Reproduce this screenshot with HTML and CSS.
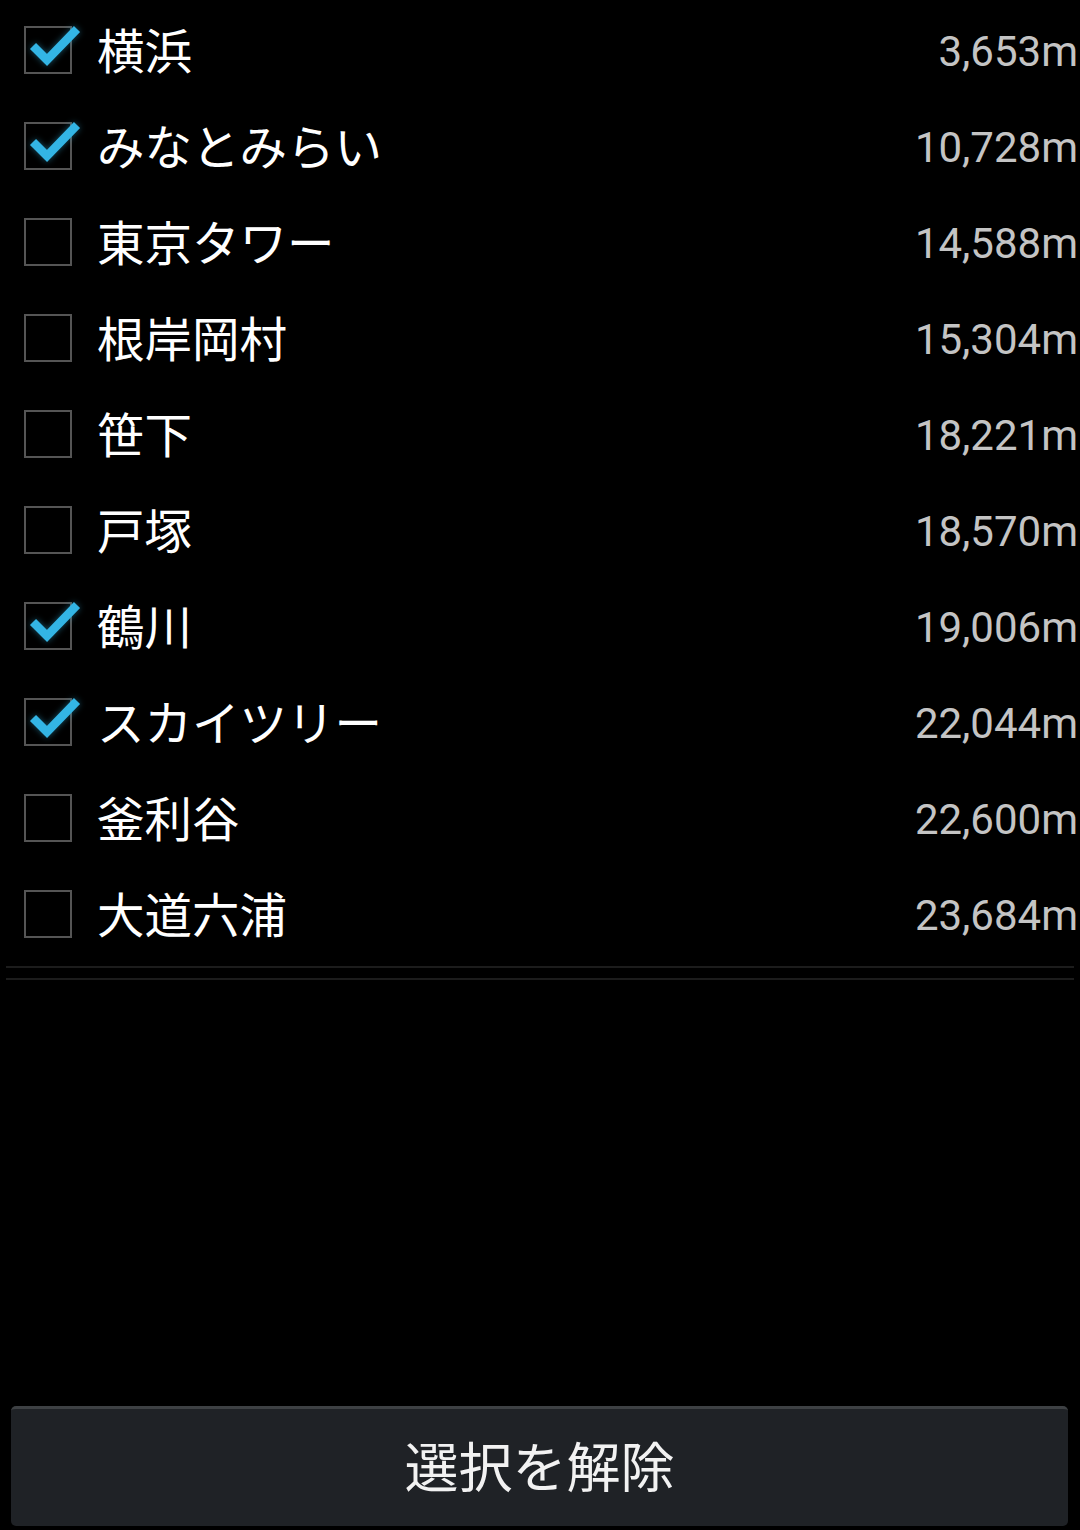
FILE: index.html
```html
<!DOCTYPE html>
<html lang="ja">
<head>
  <meta charset="UTF-8" />
  <title>スポット選択</title>
  <link rel="stylesheet" href="styles.css">
</head>
<body>
  <div class="screen">
    <ul class="spot-list">
      <li class="spot checked"><span class="box"><svg class="tick" viewBox="0 0 48 48"><polyline points="9,20 23,34 53,3" /></svg></span><span class="name">横浜</span><span class="dist">3,653m</span></li>
      <li class="spot checked"><span class="box"><svg class="tick" viewBox="0 0 48 48"><polyline points="9,20 23,34 53,3" /></svg></span><span class="name">みなとみらい</span><span class="dist">10,728m</span></li>
      <li class="spot"><span class="box"></span><span class="name">東京タワー</span><span class="dist">14,588m</span></li>
      <li class="spot"><span class="box"></span><span class="name">根岸岡村</span><span class="dist">15,304m</span></li>
      <li class="spot"><span class="box"></span><span class="name">笹下</span><span class="dist">18,221m</span></li>
      <li class="spot"><span class="box"></span><span class="name">戸塚</span><span class="dist">18,570m</span></li>
      <li class="spot checked"><span class="box"><svg class="tick" viewBox="0 0 48 48"><polyline points="9,20 23,34 53,3" /></svg></span><span class="name">鶴川</span><span class="dist">19,006m</span></li>
      <li class="spot checked"><span class="box"><svg class="tick" viewBox="0 0 48 48"><polyline points="9,20 23,34 53,3" /></svg></span><span class="name">スカイツリー</span><span class="dist">22,044m</span></li>
      <li class="spot"><span class="box"></span><span class="name">釜利谷</span><span class="dist">22,600m</span></li>
      <li class="spot"><span class="box"></span><span class="name">大道六浦</span><span class="dist">23,684m</span></li>
    </ul>

    <div class="divider"></div>
    <div class="divider"></div>

    <button class="clear-btn" type="button">選択を解除</button>
  </div>
</body>
</html>
```

FILE: styles.css
```css
/* Base */
* {
  box-sizing: border-box;
}
html, body {
  margin: 0;
  padding: 0;
  background: #000;
}
body {
  font-family: "Noto Sans CJK JP", "Noto Sans", sans-serif;
  color: #fff;
}

.screen {
  height: 1530px;
  display: flex;
  flex-direction: column;
  padding-top: 2px;
}

/* List */
.spot-list {
  list-style: none;
  margin: 0;
  padding: 0;
}

.spot {
  height: 96px;
  display: flex;
  align-items: center;
  padding: 0 2px 0 24px;
}

.box {
  position: relative;
  width: 48px;
  height: 48px;
  flex: none;
  border: 2px solid #555;
}

.tick {
  position: absolute;
  left: -2px;
  top: -2px;
  width: 48px;
  height: 48px;
  overflow: visible;
}
.tick polyline {
  fill: none;
  stroke: #33b5e5;
  stroke-width: 8.5;
  stroke-linejoin: miter;
  stroke-linecap: butt;
  filter: drop-shadow(0 0 3px rgba(51, 181, 229, 0.45));
}

.name {
  margin-left: 25px;
  margin-bottom: 3px;
  font-size: 47.5px;
  line-height: 1;
  flex: 1;
}

.dist {
  font-family: Roboto, "Liberation Sans", sans-serif;
  font-size: 42px;
  line-height: 1;
  color: #c4c4c4;
  margin-top: 4px;
}

.divider {
  height: 2px;
  margin: 4px 6px 0;
  background: #1c1c1c;
}
.divider + .divider {
  margin-top: 10px;
}

/* Bottom button */
.clear-btn {
  margin: auto 12px 4px 11px;
  height: 120px;
  background: #1f2226;
  border: none;
  border-top: 3px solid #3e4144;
  border-radius: 5px;
  color: #f2f2f2;
  font-family: "Noto Sans CJK JP", "Noto Sans", sans-serif;
  font-size: 54px;
  line-height: 1;
  padding: 0 0 6px;
}
```
